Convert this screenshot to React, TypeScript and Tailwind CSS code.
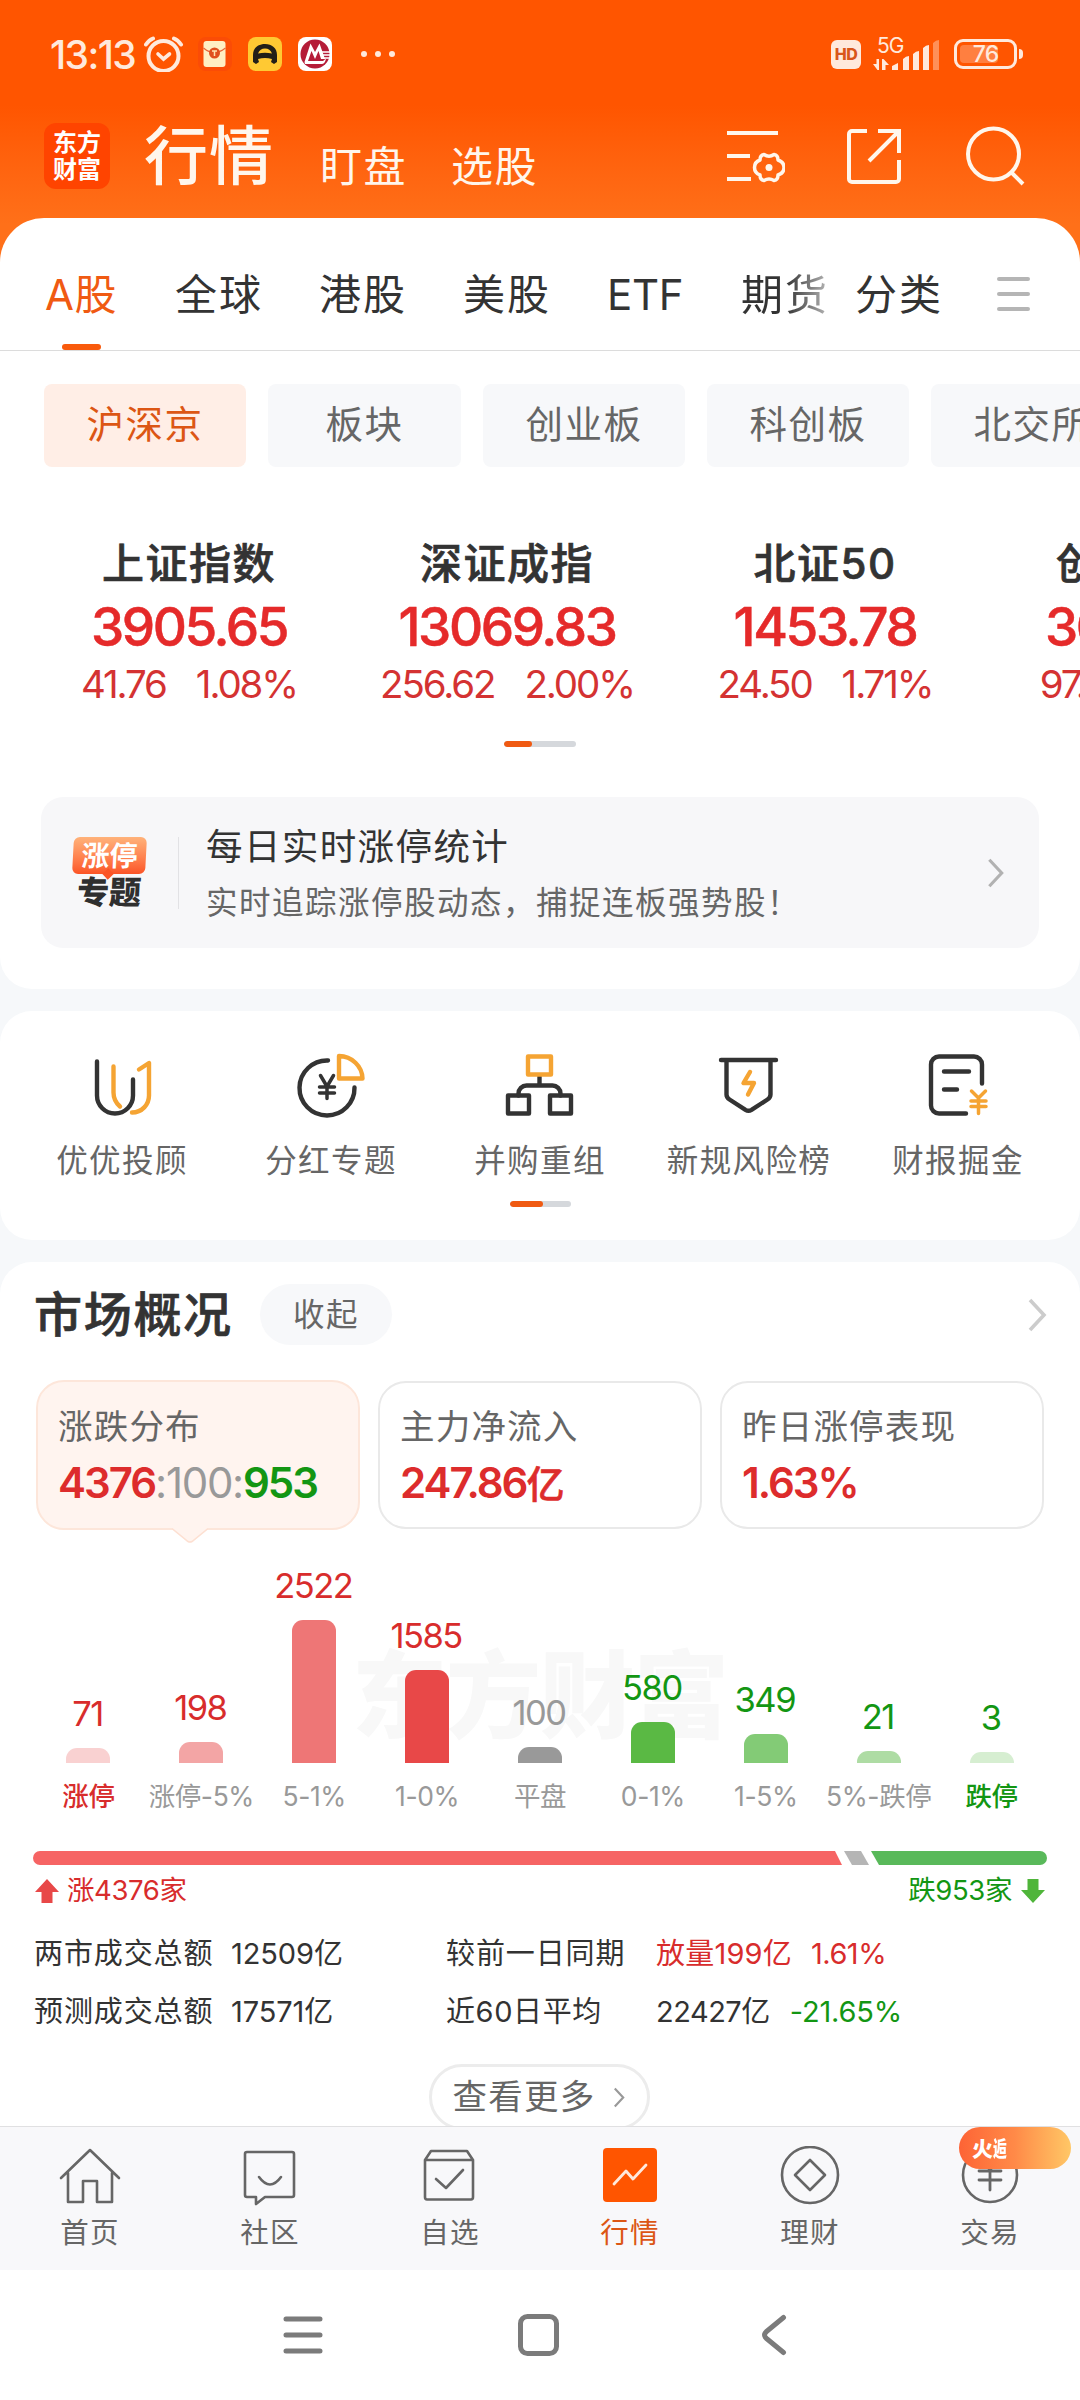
import type { ReactNode } from 'react';
import clsx from 'clsx';

type IndexQuote = { name: string; price: string; change: string; percent: string };

const tabs = ['全球', '港股', '美股', 'ETF'];

const boards = ['板块', '创业板', '科创板'];

const quotes: IndexQuote[] = [
  { name: '上证指数', price: '3905.65', change: '41.76', percent: '1.08%' },
  { name: '深证成指', price: '13069.83', change: '256.62', percent: '2.00%' },
  { name: '北证50', price: '1453.78', change: '24.50', percent: '1.71%' },
  { name: '创业板指', price: '3059.32', change: '97.48', percent: '3.2%' },
];

const distribution = [
  { label: '涨停', value: 71, height: 15, bar: 'bg-[#f9d1d1]', text: 'text-[#d82c2c]', caption: 'font-medium text-[#d82c2c]' },
  { label: '涨停-5%', value: 198, height: 21, bar: 'bg-[#f3a5a5]', text: 'text-[#d82c2c]', caption: 'text-[#999]' },
  { label: '5-1%', value: 2522, height: 143, bar: 'bg-[#ee7676]', text: 'text-[#d82c2c]', caption: 'text-[#999]' },
  { label: '1-0%', value: 1585, height: 93, bar: 'bg-[#e84848]', text: 'text-[#d82c2c]', caption: 'text-[#999]' },
  { label: '平盘', value: 100, height: 16, bar: 'bg-[#999]', text: 'text-[#999]', caption: 'text-[#999]' },
  { label: '0-1%', value: 580, height: 41, bar: 'bg-[#5ab944]', text: 'text-[#139613]', caption: 'text-[#999]' },
  { label: '1-5%', value: 349, height: 29, bar: 'bg-[#83cb76]', text: 'text-[#139613]', caption: 'text-[#999]' },
  { label: '5%-跌停', value: 21, height: 12, bar: 'bg-[#aedca4]', text: 'text-[#139613]', caption: 'text-[#999]' },
  { label: '跌停', value: 3, height: 11, bar: 'bg-[#d6eed1]', text: 'text-[#139613]', caption: 'font-medium text-[#139613]' },
];

function Chevron({ className }: { className?: string }) {
  return (
    <svg viewBox="0 0 20 34" fill="none" stroke="currentColor" className={className}>
      <path d="M3 2l14 15L3 32" strokeWidth="3.6" />
    </svg>
  );
}

function StatusBar() {
  return (
    <div className="flex h-[108px] items-center pl-[50px] pr-[57px] text-[#ffe9dc]">
      <span className="w-[92px] text-[39px] font-medium leading-none tracking-[-1.6px]">13:13</span>
      <svg viewBox="0 0 40 36" fill="none" stroke="currentColor" className="ml-[2px] h-9 w-10">
        <circle cx="19.5" cy="20" r="15" strokeWidth="4" />
        <path d="M14 18l5.5 5 6-5" strokeWidth="3.6" strokeLinecap="round" />
        <path d="M2 8.5Q5 4 9 2.500M37 8.500Q34 4 30 2.500" strokeWidth="4" strokeLinecap="round" />
      </svg>
      <svg viewBox="0 0 34 34" className="ml-[14px] h-[34px] w-[34px]">
        <rect width="34" height="34" rx="8" fill="#fb4c06" />
        <rect x="5.5" y="4" width="22" height="26" rx="3" fill="#ffefc4" />
        <path d="M5.500 11Q16 20 27.500 11" fill="none" stroke="#e8673a" strokeWidth="1.3" />
        <circle cx="16.5" cy="16" r="5.5" fill="#e0501f" />
        <path d="M14 14h5M16.500 14v5" stroke="#ffe2b0" strokeWidth="1.5" />
      </svg>
      <svg viewBox="0 0 34 34" className="ml-4 h-[34px] w-[34px]">
        <rect width="34" height="34" rx="8" fill="#ffc933" />
        <path
          d="M5 25V18C5 11 10 7 17 7s12 4 12 11v7l-3 2-3-2 1-3q-7-2-14 0l1 3-3 2z"
          fill="#221f18"
        />
        <path d="M10 16.500Q12 11.500 17 11.500t7 5q-7-1.500-14 0z" fill="#ffc933" />
      </svg>
      <svg viewBox="0 0 34 34" className="ml-4 h-[34px] w-[34px]">
        <rect width="34" height="34" rx="8" fill="#fff" />
        <circle cx="17" cy="17" r="14.500" fill="#b51c38" />
        <path d="M6.500 25L12.500 6.500 17 15l4.500-8.500L27 22h-4l-2.500-8-3.500 8-3.500-8L10 24h15l3-2.500Q27 27 23.500 27H7z" fill="#fff" />
        <path d="M24 15h9M25 18h8M26 21h6" stroke="#fff" strokeWidth="1.300" />
      </svg>
      <div className="ml-[29px] flex gap-2">
        <i className="h-1.5 w-1.5 rounded-full bg-current" />
        <i className="h-1.5 w-1.5 rounded-full bg-current" />
        <i className="h-1.5 w-1.5 rounded-full bg-current" />
      </div>
      <div className="ml-auto flex h-[29px] w-[30px] items-center justify-center rounded-md bg-current">
        <span className="text-[16px] font-extrabold leading-none tracking-tight text-[#d9561a]">HD</span>
      </div>
      <div className="ml-3 flex h-[34px] w-[68px] flex-col">
        <span className="ml-1 text-[21px] leading-[17px] tracking-[-1px]">5G</span>
        <svg viewBox="0 0 68 34" className="-mt-[17px] h-[34px] w-[68px]" fill="currentColor">
          <path d="M0 27h3.500v-5H6v11H4.500zM9 33V22h1.500L16 28h-3.500v5z" />
          <path d="M19 33V29l6-3v7zM30 33V22q3-3 6-3v14zM40 33V17q3-3 6-3v19zM50 33V11q3-3 6-3v25z" />
          <path d="M60 33V6q3-3 6-3v30z" opacity=".4" />
        </svg>
      </div>
      <div className="ml-[13px] flex h-[30px] w-[63px] rounded-[9px] border-[3px] border-current p-[3px]">
        <div className="h-full w-[38px] rounded-[4px] bg-white/25">
          <span className="block w-[51px] text-center text-[23px] font-medium leading-[18px] tracking-[-1px]">76</span>
        </div>
      </div>
      <i className="ml-[2px] h-[10px] w-1 rounded-r-sm bg-current" />
    </div>
  );
}

function Header() {
  return (
    <header className="h-[264px] bg-linear-to-b from-[#ff5500] from-40% to-[#ff7019] to-85%">
      <StatusBar />
      <div className="flex h-[96px] items-center pl-11 pr-[54px] text-[#fff6ec]">
        <div className="flex h-[66px] w-[66px] flex-col items-center justify-center rounded-xl bg-[#ff4400] text-[24px] font-bold leading-[27px] text-white">
          <span>东方</span>
          <span>财富</span>
        </div>
        <h1 className="ml-[34px] text-[64px] font-medium leading-none tracking-[1px]">行情</h1>
        <span className="ml-[46px] mt-[21px] text-[42px] leading-none tracking-[1.500px]">盯盘</span>
        <span className="ml-11 mt-[21px] text-[42px] leading-none tracking-[1.500px]">选股</span>
        <svg viewBox="0 0 58 54" fill="none" stroke="currentColor" strokeWidth="4" className="ml-auto h-[54px] w-[58px]">
          <path d="M0 4h51M0 27h23M0 50h24" />
          <path
            strokeWidth="3.500"
            strokeLinejoin="round"
            d="M37 25.500Q42 29 47 25.500Q51 26 51 31Q57 33 57 38.500Q57 44 51 46Q51 51 47 51.500Q42 48.500 37 51.500Q33 51 33 46Q27.500 44 27.500 38.500Q27.500 33 33 31Q33 26 37 25.500Z"
          />
          <circle cx="42" cy="38.500" r="3.500" fill="currentColor" stroke="none" />
        </svg>
        <svg viewBox="0 0 54 56" fill="none" stroke="currentColor" strokeWidth="4" className="ml-[62px] h-14 w-[54px]">
          <path d="M20 3H5a3 3 0 0 0-3 3v45a3 3 0 0 0 3 3h44a3 3 0 0 0 3-3V32M31 3h21v22M52 3L22 33" />
        </svg>
        <svg viewBox="0 0 60 60" fill="none" stroke="currentColor" strokeWidth="4" className="ml-[65px] h-[60px] w-[60px]">
          <circle cx="27.500" cy="28" r="25.500" />
          <path d="M45 46l12 12" />
        </svg>
      </div>
    </header>
  );
}

function Pager({ className, active }: { className: string; active: string }) {
  return (
    <div className={clsx('mx-auto h-1.5 overflow-hidden rounded-full bg-[#d5d8dc]', className)}>
      <div className={clsx('h-full rounded-full bg-[#f05a12]', active)} />
    </div>
  );
}

function MarketTabs() {
  return (
    <nav className="flex h-[133px] items-center border-b border-[#dcdcdc] pl-[45px] pt-5 text-[42px] tracking-[2px] text-[#333]">
      <span className="relative flex h-full w-[74px] items-center tracking-[0.500px] whitespace-nowrap text-[#f05a12]">
        A股
        <i className="absolute bottom-0 left-[17px] h-1.5 w-[39px] rounded-full bg-[#f95a0c]" />
      </span>
      {tabs.map((tab) => (
        <span key={tab} className={clsx('ml-14 whitespace-nowrap', tab === 'ETF' ? 'w-[78px] tracking-[-0.300px]' : 'w-[88px]')}>
          {tab}
        </span>
      ))}
      <span className="ml-14 w-[88px] bg-linear-to-r from-[#333] from-50% to-[#bbb] bg-clip-text whitespace-nowrap text-transparent">
        期货
      </span>
      <span className="ml-[26px] w-[88px] whitespace-nowrap">分类</span>
      <div className="ml-[54px] flex flex-col gap-[11px]">
        <i className="h-1 w-[33px] rounded-full bg-[#b5b5b5]" />
        <i className="h-1 w-[33px] rounded-full bg-[#b5b5b5]" />
        <i className="h-1 w-[33px] rounded-full bg-[#b5b5b5]" />
      </div>
    </nav>
  );
}

function BoardChips() {
  const chip = 'flex h-[83px] shrink-0 items-center justify-center rounded-lg text-[37.500px] tracking-[1.500px]';
  return (
    <div className="mt-[33px] flex gap-[22px] overflow-hidden pl-11">
      <span className={clsx(chip, 'w-[202px] bg-[#ffeee6] text-[#dc5614]')}>沪深京</span>
      {boards.map((board) => (
        <span key={board} className={clsx(chip, 'bg-[#f7f8fa] text-[#666]', board.length === 2 ? 'w-[193px]' : 'w-[202px]')}>
          {board}
        </span>
      ))}
      <span className={clsx(chip, 'w-[202px] bg-[#f7f8fa] text-[#666]')}>北交所</span>
    </div>
  );
}

function Quotes() {
  return (
    <div className="mt-[71px] flex overflow-hidden pl-[30px]">
      {quotes.map((q) => (
        <div key={q.name} className="flex w-[318px] shrink-0 flex-col items-center whitespace-nowrap">
          <span className="flex h-[52px] items-center text-[42px] font-medium leading-none tracking-[1.500px] text-[#333] [-webkit-text-stroke:0.700px_#333]">
            {q.name}
          </span>
          <span className="flex h-[74px] items-center text-[53px] font-medium leading-none tracking-[-2.400px] text-[#e52a2a] [-webkit-text-stroke:0.500px_#e52a2a]">
            {q.price}
          </span>
          <span className="flex h-10 items-center gap-[30px] text-[38.500px] leading-none tracking-[-2.100px] text-[#d43232]">
            <span>{q.change}</span>
            <span>{q.percent}</span>
          </span>
        </div>
      ))}
    </div>
  );
}

function LimitUpBanner() {
  return (
    <div className="mx-[41px] mt-[50px] flex h-[151px] items-center rounded-[22px] bg-[#f7f7f9] pl-[31px] pr-[34px]">
      <div className="flex w-[75px] flex-col items-center">
        <span className="relative flex h-[37px] w-[73px] -skew-x-3 items-center justify-center rounded-md bg-linear-to-b from-[#ffb27a] to-[#fb5325] text-[28px] font-bold text-white">
          涨停
          <i className="absolute -bottom-1 left-8 h-2 w-2 rotate-45 bg-[#fb5325]" />
        </span>
        <span className="mt-[3px] -skew-x-3 text-[32px] font-black leading-[32px] text-[#2f2f2f]">专题</span>
      </div>
      <i className="ml-[31px] h-[72px] w-px bg-[#e2e2e5]" />
      <div className="ml-[27px] flex flex-col pt-[5px]">
        <span className="h-[55px] text-[36.500px] leading-[55px] tracking-[1.400px] text-[#333]">每日实时涨停统计</span>
        <span className="h-[55px] text-[31.500px] leading-[55px] tracking-[1.500px] text-[#666]">
          实时追踪涨停股动态，捕捉连板强势股！
        </span>
      </div>
      <Chevron className="ml-auto h-[30px] w-[19px] text-[#b2b2b2]" />
    </div>
  );
}

const shortcuts: { label: string; icon: ReactNode }[] = [
  {
    label: '优优投顾',
    icon: (
      <>
        <path d="M8 9v34a18 18 0 0 0 36 0V27" stroke="#333" />
        <path d="M24.500 14v26c0 7 3 11 6.500 14M50 17l10-6.500V43c0 9-7 17-17 17" stroke="#f5a433" />
      </>
    ),
  },
  {
    label: '分红专题',
    icon: (
      <>
        <path d="M30 8A27.500 27.500 0 1 0 56.500 35" stroke="#333" />
        <path d="M41 3.500V26h23.500A24 23 0 0 0 41 3.500z" stroke="#f5a433" />
        <path d="M22.500 23l6.500 11 6.500-11M29 34v12M21.500 34.500h15M21.500 40.500h15" stroke="#333" strokeWidth="3.500" />
      </>
    ),
  },
  {
    label: '并购重组',
    icon: (
      <>
        <path d="M32.500 24v9M11.500 43v-2a8 8 0 0 1 8-8h26a8 8 0 0 1 8 8v2" stroke="#333" />
        <path d="M1 43h21v18H1zM43 43h21v18H43z" stroke="#333" />
        <path d="M21 4h23v18H21z" stroke="#f5a433" />
      </>
    ),
  },
  {
    label: '新规风险榜',
    icon: (
      <>
        <path d="M5 7.500h55M10.500 8v34q0 3 3 5l16 10.300q3 1.800 6 0l16-10.300q3-2 3-5V8" stroke="#333" />
        <path d="M34 19.500l-6.500 11H38L32 42" stroke="#f5a433" />
      </>
    ),
  },
  {
    label: '财报掘金',
    icon: (
      <>
        <path d="M41 61H14a8 8 0 0 1-8-8V12a8 8 0 0 1 8-8h35a8 8 0 0 1 8 8v19M19 19h25M19 37h13" stroke="#333" />
        <path d="M46.500 38.500l7 7 7-7M53.500 46v15M46 48.500h15M46 54h15" stroke="#f5a433" strokeWidth="3.500" />
      </>
    ),
  },
];

function Shortcuts() {
  return (
    <section className="mt-[22px] h-[229px] rounded-[32px] bg-white pt-[42px]">
      <div className="flex px-[17px]">
        {shortcuts.map((s) => (
          <div key={s.label} className="flex w-[209px] flex-col items-center">
            <svg
              viewBox="1 0.500 64 64"
              fill="none"
              strokeWidth="4.400"
              strokeLinecap="round"
              strokeLinejoin="round"
              className="h-16 w-16 overflow-visible"
            >
              {s.icon}
            </svg>
            <span className="mt-6 h-10 pl-px text-[31.500px] leading-10 tracking-[1.400px] whitespace-nowrap text-[#666]">
              {s.label}
            </span>
          </div>
        ))}
      </div>
      <Pager className="mt-5 w-[61px]" active="w-[33px]" />
    </section>
  );
}

function SummaryCards() {
  const card = 'flex w-[324px] flex-col justify-center rounded-[28px] border-2 pl-5';
  const label = 'h-[56px] text-[34.500px] leading-[56px] tracking-[1.200px] text-[#666]';
  const value = 'h-[56px] text-[42px] font-semibold leading-[56px] tracking-[-2px]';
  return (
    <div className="mt-[35px] flex h-[150px] items-center gap-[18px] px-9">
      <div className={clsx(card, 'relative h-[150px] border-[#fde6da] bg-[#fff4ef]')}>
        <span className={label}>涨跌分布</span>
        <span className={clsx(value, 'whitespace-nowrap text-[#dd2c2c]')}>
          4376<span className="font-normal tracking-[-1.300px] text-[#999]">:100:</span>
          <span className="text-[#139613]">953</span>
        </span>
        <svg viewBox="0 0 36 16" className="absolute -bottom-[15px] left-[134px] h-4 w-9">
          <path d="M0 0h36v1.500L20 15q-2 1-4 0L0 1.500z" fill="#fff4ef" />
          <path d="M0 1.500L16 14.500q2 1 4 0L36 1.500" fill="none" stroke="#fde0d2" strokeWidth="1.500" />
        </svg>
      </div>
      <div className={clsx(card, 'h-[148px] border-[#e9e9e9]')}>
        <span className={label}>主力净流入</span>
        <span className={clsx(value, 'text-[#dd2c2c]')}>
          247.86<span className="text-[38px] font-medium [-webkit-text-stroke:0.600px_#dd2c2c]">亿</span>
        </span>
      </div>
      <div className={clsx(card, 'h-[148px] border-[#e9e9e9]')}>
        <span className={label}>昨日涨停表现</span>
        <span className={clsx(value, 'text-[#dd2c2c]')}>1.63%</span>
      </div>
    </div>
  );
}

function DistributionChart() {
  return (
    <div className="relative px-8">
      <div className="absolute left-[352px] top-[112px] text-[95px] font-black leading-[110px] tracking-[-1px] whitespace-nowrap text-[#f8f8f8]">
        东方财富
      </div>
      <div className="relative flex h-[233px] items-end">
        {distribution.map((d) => (
          <div key={d.label} className="flex flex-1 flex-col items-center">
            <span className={clsx('mb-[13px] pr-[2px] text-[34.500px] leading-[42px] tracking-[-1.500px]', d.text)}>{d.value}</span>
            <div className={clsx('w-11 rounded-t-[11px]', d.bar)} style={{ height: d.height }} />
          </div>
        ))}
      </div>
      <div className="relative mt-[19px] flex h-[30px]">
        {distribution.map((d) => (
          <span
            key={d.label}
            className={clsx('flex flex-1 items-center justify-center text-[26.500px] whitespace-nowrap tracking-[-0.400px]', d.caption)}
          >
            {d.label}
          </span>
        ))}
      </div>
    </div>
  );
}

function AdvanceDecline() {
  return (
    <>
      <div className="mx-[33px] mt-[39px] flex h-[14px]">
        <div className="w-[809px] rounded-l-full bg-[#f66464] [clip-path:polygon(0_0,802px_0,809px_100%,0_100%)]" />
        <div className="ml-[2px] w-[25px] bg-[#b5b5b5] [clip-path:polygon(0_0,17px_0,100%_100%,8px_100%)]" />
        <div className="ml-[2px] flex-1 rounded-r-full bg-[#59b95a] [clip-path:polygon(0_0,100%_0,100%_100%,8px_100%)]" />
      </div>
      <div className="mt-2 flex h-9 items-center justify-between px-[35px] text-[27.500px] tracking-[-0.400px]">
        <span className="flex items-center gap-2 text-[#d82c2c]">
          <svg viewBox="0 0 24 24" fill="#e84848" className="h-6 w-6">
            <path d="M12 0l12 13h-6.500v11h-11V13H0z" />
          </svg>
          涨4376家
        </span>
        <span className="flex items-center gap-[9px] text-[#139613]">
          跌953家
          <svg viewBox="0 0 24 24" fill="#4fb53a" className="h-6 w-6">
            <path d="M12 24L0 11h6.500V0h11v11H24z" />
          </svg>
        </span>
      </div>
    </>
  );
}

function Turnover() {
  const row = 'flex h-[58px] items-center text-[29px] whitespace-nowrap text-[#333]';
  return (
    <div className="mt-4 pl-[34px]">
      <div className={row}>
        <span className="w-[197px] tracking-[0.900px]">两市成交总额</span>
        <span className="w-[215px] tracking-[-0.100px]">12509亿</span>
        <span className="w-[210px] tracking-[0.900px]">较前一日同期</span>
        <span className="tracking-[0.200px] text-[#d82c2c]">放量199亿</span>
        <span className="ml-[19px] tracking-[-0.500px] text-[#d82c2c]">1.61%</span>
      </div>
      <div className={row}>
        <span className="w-[197px] tracking-[0.900px]">预测成交总额</span>
        <span className="w-[215px] tracking-[-0.100px]">17571亿</span>
        <span className="w-[210px] tracking-[0.600px]">近60日平均</span>
        <span className="tracking-[-0.500px]">22427亿</span>
        <span className="ml-5 tracking-[-0.200px] text-[#139613]">-21.65%</span>
      </div>
    </div>
  );
}

function MarketOverview() {
  return (
    <section className="mt-[22px] h-[864px] overflow-hidden rounded-t-[32px] bg-white pt-[22px]">
      <div className="flex h-[61px] items-center pl-[34px] pr-[33px]">
        <h2 className="w-[226px] text-[48px] font-medium leading-none tracking-[1.700px] text-[#333] [-webkit-text-stroke:0.700px_#333]">
          市场概况
        </h2>
        <span className="flex h-[61px] w-[132px] items-center justify-center rounded-full bg-[#f7f8fa] text-[31.500px] tracking-[1.500px] text-[#666]">
          收起
        </span>
        <Chevron className="ml-auto h-[34px] w-5 text-[#ccc]" />
      </div>
      <SummaryCards />
      <DistributionChart />
      <AdvanceDecline />
      <Turnover />
      <div className="mx-auto mt-[23px] flex h-[66px] w-[221px] -translate-x-px items-center justify-center rounded-full border-[3px] border-[#ececec] text-[34.500px] tracking-[1.200px] text-[#666]">
        查看更多
        <Chevron className="ml-[18px] h-[21px] w-3 text-[#999]" />
      </div>
    </section>
  );
}

const navItems: { label: string; active?: boolean; icon: ReactNode }[] = [
  { label: '首页', icon: <path d="M3 32L32 4l29 28M10 27v29h15V35h14v21h15V27" /> },
  {
    label: '社区',
    icon: (
      <>
        <path d="M9 6h45q2 0 2 2v41q0 2-2 2H27l-9 7v-7H9q-2 0-2-2V8q0-2 2-2z" />
        <path d="M21 31q11 15 22 0" />
      </>
    ),
  },
  {
    label: '自选',
    icon: (
      <>
        <path d="M7 14l6-9h36l6 9v37q0 2.500-2 2.500H9q-2 0-2-2.500zM7 14h48" />
        <path d="M18 33l10 9 17-18" />
      </>
    ),
  },
  {
    label: '行情',
    active: true,
    icon: (
      <>
        <rect x="5" y="2" width="54" height="54" rx="4" fill="#ff5500" stroke="none" />
        <path d="M16 38l12-13 7 8 13-14" stroke="#ffe9dc" strokeWidth="2.800" />
      </>
    ),
  },
  {
    label: '理财',
    icon: (
      <>
        <circle cx="32" cy="29" r="28" />
        <path d="M32 14l15 15-15 15-15-15z" />
      </>
    ),
  },
  {
    label: '交易',
    icon: (
      <>
        <circle cx="32" cy="29" r="27" />
        <path d="M21 25h22M21 34h22M32 24v20M23 12l9 12 9-12" strokeWidth="2.800" />
      </>
    ),
  },
];

function BottomNav() {
  return (
    <nav className="relative flex h-36 border-t border-[#e0e0e2] bg-[#f8f8fa]">
      {navItems.map((item) => (
        <div key={item.label} className="flex w-[180px] flex-col items-center pt-[19px]">
          <svg
            viewBox="0 0 64 60"
            fill="none"
            stroke="#666"
            strokeWidth="2.600"
            strokeLinejoin="round"
            strokeLinecap="round"
            className="h-[60px] w-16"
          >
            {item.icon}
          </svg>
          <span
            className={clsx(
              'mt-[7px] h-10 text-[28.500px] leading-10 tracking-[1.200px]',
              item.active ? 'text-[#dc5614]' : 'text-[#666]',
            )}
          >
            {item.label}
          </span>
        </div>
      ))}
      <div className="absolute left-[959px] top-0 flex h-[42px] w-[112px] items-center rounded-full bg-linear-to-r from-[#fd6335] via-[#ff8a48] to-[#ffc766] pl-[13px] text-[21px] font-black leading-none text-white">
        火
        <span className="w-4 origin-left scale-x-[0.65]">逅</span>
      </div>
    </nav>
  );
}

function SystemNav() {
  return (
    <div className="flex h-[130px] items-center bg-white pb-px">
      <svg
        viewBox="0 0 540 42"
        fill="none"
        stroke="#7b7b7b"
        strokeWidth="5"
        strokeLinecap="round"
        className="ml-[269px] h-[42px] w-[540px]"
      >
        <path d="M17 5h34M17 21h34M17 37h34" />
        <rect x="251.500" y="2.500" width="36" height="37" rx="7" />
        <path d="M514.500 3.500l-17 14q-4 3.500 0 7l17 14" strokeLinejoin="round" />
      </svg>
    </div>
  );
}

export default function App() {
  return (
    <div className="h-[2400px] w-[1080px] overflow-hidden bg-[#f6f8fa] font-['Inter','Noto_Sans_CJK_SC',sans-serif]">
      <Header />
      <section className="relative -mt-[46px] rounded-t-[44px] rounded-b-[32px] bg-white pb-[41px]">
        <MarketTabs />
        <BoardChips />
        <Quotes />
        <Pager className="mt-[37px] w-[72px]" active="w-[28px]" />
        <LimitUpBanner />
      </section>
      <Shortcuts />
      <MarketOverview />
      <BottomNav />
      <SystemNav />
    </div>
  );
}
